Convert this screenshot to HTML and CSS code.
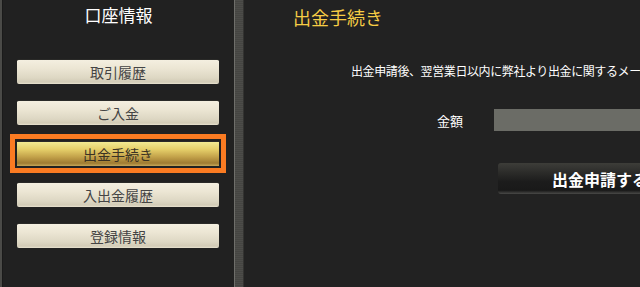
FILE: index.html
```html
<!DOCTYPE html>
<html lang="ja">
<head>
<meta charset="utf-8">
<title>出金手続き</title>
<link rel="stylesheet" href="styles.css">
</head>
<body>
<div class="page">
  <div class="edge"></div>
  <aside class="sidebar">
    <h1 class="side-title">口座情報</h1>
    <nav class="menu">
      <a class="menu-btn" href="#">取引履歴</a>
      <a class="menu-btn" href="#">ご入金</a>
      <a class="menu-btn active" href="#">出金手続き</a>
      <a class="menu-btn" href="#">入出金履歴</a>
      <a class="menu-btn" href="#">登録情報</a>
    </nav>
  </aside>
  <div class="divider"></div>
  <main class="main">
    <h2 class="main-title">出金手続き</h2>
    <p class="notice">出金申請後、翌営業日以内に弊社より出金に関するメールをお送りいたします。</p>
    <div class="form-row">
      <label class="label" for="amount">金額</label>
      <input class="field" id="amount" type="text">
    </div>
    <button class="submit" type="button">出金申請する</button>
  </main>
</div>
</body>
</html>
```

FILE: styles.css
```css
html, body {
  margin: 0;
  padding: 0;
  background: #222222;
  overflow: hidden;
}
body {
  font-family: "Noto Sans CJK JP", "DejaVu Sans", sans-serif;
  width: 640px;
  height: 287px;
}
.page {
  display: flex;
  height: 287px;
}
.edge {
  width: 3px;
  flex: none;
  background: #4a4a47;
  border-right: 1px solid #1a1a1a;
  box-sizing: border-box;
}
.sidebar {
  width: 231px;
  flex: none;
  background: #212121;
  display: flex;
  flex-direction: column;
  align-items: center;
}
.side-title {
  margin: 0;
  font-size: 17px;
  font-weight: normal;
  line-height: 30px;
  color: #ffffff;
}
.menu {
  margin-top: 29px;
  display: flex;
  flex-direction: column;
  gap: 16px;
  width: 202px;
  margin-left: -1px;
}
.menu-btn {
  display: block;
  height: 25px;
  line-height: 25px;
  text-align: center;
  font-size: 14px;
  color: #444444;
  text-decoration: none;
  border-radius: 2px;
  box-sizing: border-box;
  border-top: 1px solid #2a2a28;
  background: linear-gradient(#f4efe0 0%, #ece6d4 35%, #ddd7c3 75%, #d2cbb6 92%, #e8e2cf 100%);
}
.menu-btn.active {
  color: #3a3224;
  border-radius: 0;
  background: linear-gradient(#f2ea92 0%, #e6d06a 30%, #c3a24a 62%, #9f7b32 88%, #c6a758 100%);
  outline: 5px solid #fb7b22;
  outline-offset: 2px;
}
.divider {
  width: 10px;
  flex: none;
  box-sizing: border-box;
  background: repeating-linear-gradient(0deg, #4c4c49 0px, #4c4c49 1px, #454542 1px, #454542 2px);
  border-left: 1px solid #6e6e6a;
  border-right: 1px solid #333331;
}
.main {
  flex: 1;
  min-width: 0;
  overflow: hidden;
  background: #222222;
}
.main-title {
  margin: 0;
  padding-left: 49px;
  font-size: 18px;
  font-weight: normal;
  line-height: 34px;
  color: #f7cd45;
}
.notice {
  margin: 29px 0 0;
  padding-left: 107px;
  font-size: 12px;
  line-height: 16px;
  letter-spacing: -0.4px;
  color: #ffffff;
  white-space: nowrap;
}
.form-row {
  margin-top: 30px;
  display: flex;
  align-items: center;
  padding-left: 193px;
  height: 22px;
}
.label {
  font-size: 13px;
  color: #ffffff;
  width: 26px;
  margin-right: 31px;
  flex: none;
}
.field {
  flex: none;
  width: 260px;
  height: 22px;
  box-sizing: border-box;
  border: none;
  background: #6b6c66;
  padding: 0;
}
.submit {
  display: block;
  margin-top: 32px;
  margin-left: 254px;
  width: 204px;
  height: 31px;
  border: none;
  border-radius: 3px;
  padding: 0;
  font-family: inherit;
  font-size: 16px;
  font-weight: bold;
  color: #ffffff;
  text-align: center;
  background: linear-gradient(#3d3d39 0%, #2c2c2a 30%, #1c1c1c 60%, #191919 88%, #4a4a48 100%);
}
```
